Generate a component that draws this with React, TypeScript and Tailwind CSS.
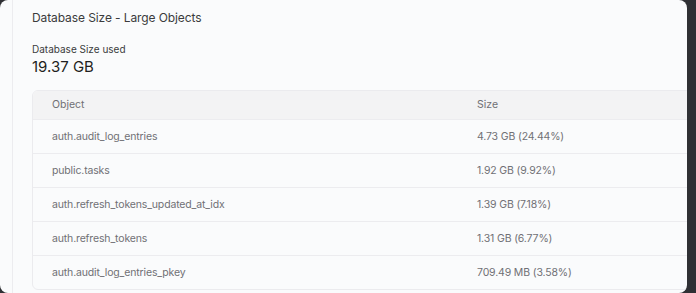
import React from "react";

const rows = [
  ["auth.audit_log_entries", "4.73 GB (24.44%)"],
  ["public.tasks", "1.92 GB (9.92%)"],
  ["auth.refresh_tokens_updated_at_idx", "1.39 GB (7.18%)"],
  ["auth.refresh_tokens", "1.31 GB (6.77%)"],
  ["auth.audit_log_entries_pkey", "709.49 MB (3.58%)"],
];

export default function App() {
  return (
    <div
      className="w-[696px] h-[293px] bg-[#2f3034] overflow-hidden"
      style={{ fontFamily: "Inter, 'Noto Sans', sans-serif" }}
    >
      <div className="w-[687px] h-[293px] rounded-lg bg-[#fafbfc] overflow-hidden">
        <div className="ml-[12px] h-full border-l border-[#ececef] pl-[19px] pt-[9px]">
          <div className="text-[12px] leading-[18px] text-[#3b3b3d] tracking-[-0.1px]">
            Database Size - Large Objects
          </div>
          <div className="mt-[15px] text-[10px] leading-[14px] text-[#3b3b3d]">
            Database Size used
          </div>
          <div className="mt-[1px] text-[15px] leading-[20px] text-[#1f1f21]">
            19.37 GB
          </div>
          <div className="mt-[13px] w-[700px] rounded-md border border-[#ebebee] overflow-hidden">
            <div className="flex h-[28px] items-center bg-[#f3f3f4] text-[10.5px] text-[#707075]">
              <div className="w-[444px] pl-[19px]">Object</div>
              <div>Size</div>
            </div>
            {rows.map(([a, b]) => (
              <div
                key={a}
                className="flex h-[34px] items-center border-t border-[#ececef] text-[10.5px] text-[#707075] tracking-[-0.15px]"
              >
                <div className="w-[444px] pl-[19px]">{a}</div>
                <div>{b}</div>
              </div>
            ))}
          </div>
        </div>
      </div>
    </div>
  );
}
